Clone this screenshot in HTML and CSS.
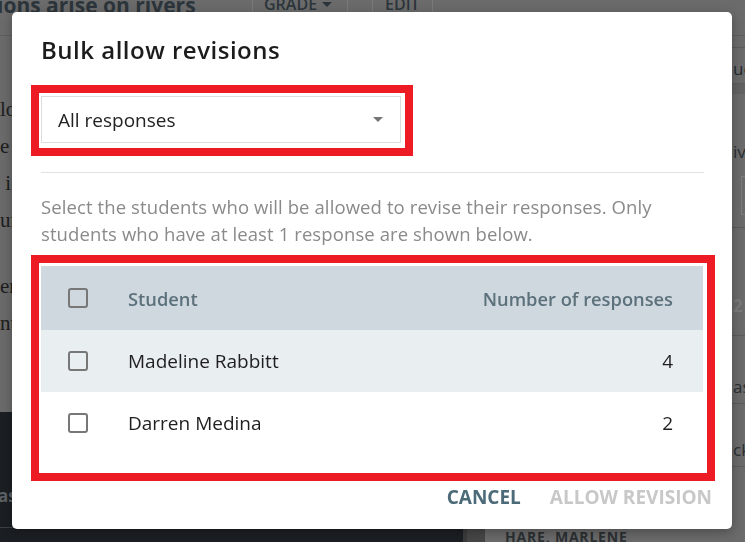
FILE: index.html
```html
<!DOCTYPE html>
<html lang="en">
<head>
  <meta charset="UTF-8">
  <meta name="viewport" content="width=device-width, initial-scale=1.0">
  <title>Bulk allow revisions</title>
  <link rel="stylesheet" href="styles.css">
</head>
<body>

  <!-- Lesson page, dimmed behind the dialog -->
  <div class="page">
    <header class="topbar">
      <h1 class="lesson-title">ions arise on rivers</h1>
      <nav class="tabs">
        <span class="tab tab-grade">GRADE <span class="tab-caret"></span></span>
        <span class="tab-gap"></span>
        <span class="tab tab-edit">EDIT</span>
      </nav>
    </header>

    <div class="workspace">
      <div class="left-pane">
        <div class="reading">
          <p>lo<br>e<br>&nbsp;i<br>ur</p>
          <p>er<br>nt</p>
        </div>
        <div class="dark-panel">
          <div class="dark-label">as</div>
          <div class="dark-rule"></div>
        </div>
      </div>
      <div class="gutter"></div>
      <div class="student-list">
        <div class="student-name">HARE, MARLENE</div>
      </div>
      <div class="side-pane">
        <div class="side-rule first"></div>
        <div class="side-row top">uct</div>
        <div class="side-band"></div>
        <div class="side-row spaced">ivity</div>
        <div class="side-box"></div>
        <div class="side-rule"></div>
        <div class="side-row faint">2 1</div>
        <div class="side-row ruled">asic</div>
        <div class="side-row ruled low">ck</div>
      </div>
    </div>
  </div>

  <!-- Dialog -->
  <div class="modal">
    <h2 class="modal-title">Bulk allow revisions</h2>

    <div class="highlight select-highlight">
      <div class="select">
        <span>All responses</span>
        <span class="select-caret"></span>
      </div>
    </div>

    <div class="divider"></div>

    <p class="hint">Select the students who will be allowed to revise their responses. Only students who have at least 1 response are shown below.</p>

    <div class="highlight table-highlight">
      <table class="students">
        <thead>
          <tr>
            <th class="check-col"><span class="checkbox"></span></th>
            <th class="name-col">Student</th>
            <th class="count-col">Number of responses</th>
          </tr>
        </thead>
        <tbody>
          <tr class="shaded">
            <td class="check-col"><span class="checkbox"></span></td>
            <td class="name-col">Madeline Rabbitt</td>
            <td class="count-col">4</td>
          </tr>
          <tr>
            <td class="check-col"><span class="checkbox"></span></td>
            <td class="name-col">Darren Medina</td>
            <td class="count-col">2</td>
          </tr>
        </tbody>
      </table>
    </div>

    <div class="modal-actions">
      <button class="btn btn-cancel">Cancel</button>
      <button class="btn btn-allow" disabled>Allow revision</button>
    </div>
  </div>

</body>
</html>
```

FILE: styles.css
```css
html, body {
  margin: 0;
  padding: 0;
}

body {
  width: 745px;
  height: 542px;
  overflow: hidden;
  font-family: 'Open Sans', 'Liberation Sans', sans-serif;
  background-color: #6b6b6b;
}

/* ---- page behind the dialog (already dimmed colours) ---- */

.page {
  width: 745px;
  height: 542px;
  display: flex;
  flex-direction: column;
}

.topbar {
  height: 35px;
  flex: none;
  display: flex;
  border-bottom: 1px solid #5f5f5f;
  overflow: hidden;
}

.lesson-title {
  width: 252px;
  flex: none;
  margin: -7px 0 0 -3px;
  font-size: 21px;
  font-weight: 700;
  line-height: 24px;
  color: #2c353b;
  white-space: nowrap;
}

.tabs {
  display: flex;
  margin-left: 3px;
}

.tab {
  box-sizing: border-box;
  height: 35px;
  display: flex;
  align-items: flex-start;
  gap: 5px;
  border-left: 1px solid #7a7a7a;
  border-right: 1px solid #7a7a7a;
  font-size: 16px;
  font-weight: 600;
  line-height: 8px;
  color: #2c353b;
}

.tab-grade {
  width: 96px;
  padding-left: 11px;
}

.tab-edit {
  width: 61px;
  padding-left: 12px;
}

.tab-gap {
  width: 24px;
}

.tab-caret {
  width: 0;
  height: 0;
  margin-top: 2px;
  border-left: 5px solid transparent;
  border-right: 5px solid transparent;
  border-top: 5px solid #2c353b;
}

.workspace {
  flex: 1;
  display: grid;
  grid-template-columns: 463px 22px 1fr 13px;
}

.left-pane {
  display: grid;
  grid-template-rows: 376px 1fr;
}

.reading {
  padding-top: 55px;
  font-family: 'Liberation Serif', serif;
  font-size: 21px;
  line-height: 37px;
  color: #1e1e1e;
  white-space: nowrap;
  overflow: hidden;
}

.reading p {
  margin: 0 0 29px;
}

.dark-panel {
  background-color: #1b1f23;
  padding-top: 74px;
}

.dark-label {
  margin-left: -2px;
  font-size: 17px;
  font-weight: 700;
  line-height: 20px;
  color: #5d6266;
}

.dark-rule {
  margin-top: 21px;
  height: 1px;
  background-color: #3b4044;
}

.gutter {
  background-color: #474747;
  border-left: 4px solid #3c3c3c;
}

.student-list {
  padding: 491px 0 0 20px;
}

.student-name {
  font-size: 14px;
  font-weight: 700;
  letter-spacing: 0.8px;
  line-height: 20px;
  color: #2b3033;
}

.side-pane {
  display: flex;
  flex-direction: column;
  font-size: 17px;
  color: #1f2a30;
  white-space: nowrap;
  overflow: hidden;
}

.side-rule {
  height: 1px;
  margin-top: 12px;
  background-color: #5d5d5d;
}

.side-rule.first {
  margin-top: 11px;
}

.side-row {
  height: 35px;
  line-height: 35px;
  padding-left: 1px;
  border-bottom: 1px solid #5d5d5d;
}

.side-row.top {
  height: 29px;
  line-height: 29px;
  padding-top: 6px;
}

.side-row.spaced {
  margin-top: 40px;
  border-bottom: none;
  color: #2a2f33;
}

.side-row.faint {
  margin-top: 60px;
  border-bottom: 1px solid #5d5d5d;
  color: #7a7a7a;
  font-weight: 700;
  padding-bottom: 12px;
}

.side-row.ruled {
  height: 32px;
  line-height: 32px;
  margin-top: 35px;
  color: #2a2f33;
}

.side-row.low {
  margin-top: 30px;
}

.side-band {
  height: 10px;
  background-color: #626262;
}

.side-box {
  height: 37px;
  margin: 7px 0 0 9px;
  border: 1px solid #7d7d7d;
  border-right: none;
}

/* ---- dialog ---- */

.modal {
  position: fixed;
  top: 12px;
  left: 12px;
  width: 720px;
  height: 517px;
  box-sizing: border-box;
  padding: 22px 28px 0 29px;
  background-color: #fff;
  border-radius: 5px;
  box-shadow: 0 3px 12px rgba(0, 0, 0, 0.3);
}

.modal-title {
  margin: 0;
  font-size: 24px;
  font-weight: 600;
  letter-spacing: 0.5px;
  line-height: 32px;
  color: #1c1c1c;
}

.highlight {
  box-sizing: border-box;
  border: 8px solid #ed1c24;
}

.select-highlight {
  width: 382px;
  margin: 19px 0 0 -10px;
  padding: 3px 4px 5px 2px;
}

.select {
  height: 47px;
  box-sizing: border-box;
  display: flex;
  align-items: center;
  justify-content: space-between;
  padding: 0 17px 0 16px;
  border: 1px solid #dcdcdc;
  font-size: 19px;
  color: #222;
}

.select-caret {
  width: 0;
  height: 0;
  border-left: 5px solid transparent;
  border-right: 5px solid transparent;
  border-top: 5px solid #757575;
}

.divider {
  margin-top: 16px;
  border-top: 1px solid #e2e2e2;
}

.hint {
  margin: 20px 0 0;
  font-size: 18.5px;
  letter-spacing: 0.1px;
  line-height: 27px;
  color: #8a8a8a;
}

.table-highlight {
  margin: 8px -11px 0 -10px;
  padding: 3px 4px 19px 2px;
}

.students {
  width: 100%;
  border-collapse: collapse;
  font-size: 19px;
  color: #1f1f1f;
}

.students th {
  height: 64px;
  padding: 0;
  background-color: #cfd8de;
  font-size: 18.3px;
  font-weight: 600;
  color: #5c717c;
  text-align: left;
}

.students td {
  height: 62px;
  padding: 0;
}

.students tr.shaded td {
  background-color: #e9eef1;
}

.check-col {
  width: 60px;
  padding-left: 27px !important;
}

.students .count-col {
  text-align: right;
  padding-right: 30px;
}

.checkbox {
  display: block;
  width: 20px;
  height: 20px;
  box-sizing: border-box;
  border: 2px solid #777;
  border-radius: 3px;
}

.modal-actions {
  display: flex;
  justify-content: flex-end;
  gap: 13px;
  margin-right: -16px;
}

.btn {
  padding: 0 8px;
  border: none;
  background: none;
  font-family: 'Open Sans', 'Liberation Sans', sans-serif;
  font-size: 19px;
  font-weight: 700;
  line-height: 32px;
  text-transform: uppercase;
  cursor: pointer;
}

.btn-cancel {
  color: #4c6a78;
}

.btn-allow {
  color: #c8c8c8;
  cursor: default;
}
```
